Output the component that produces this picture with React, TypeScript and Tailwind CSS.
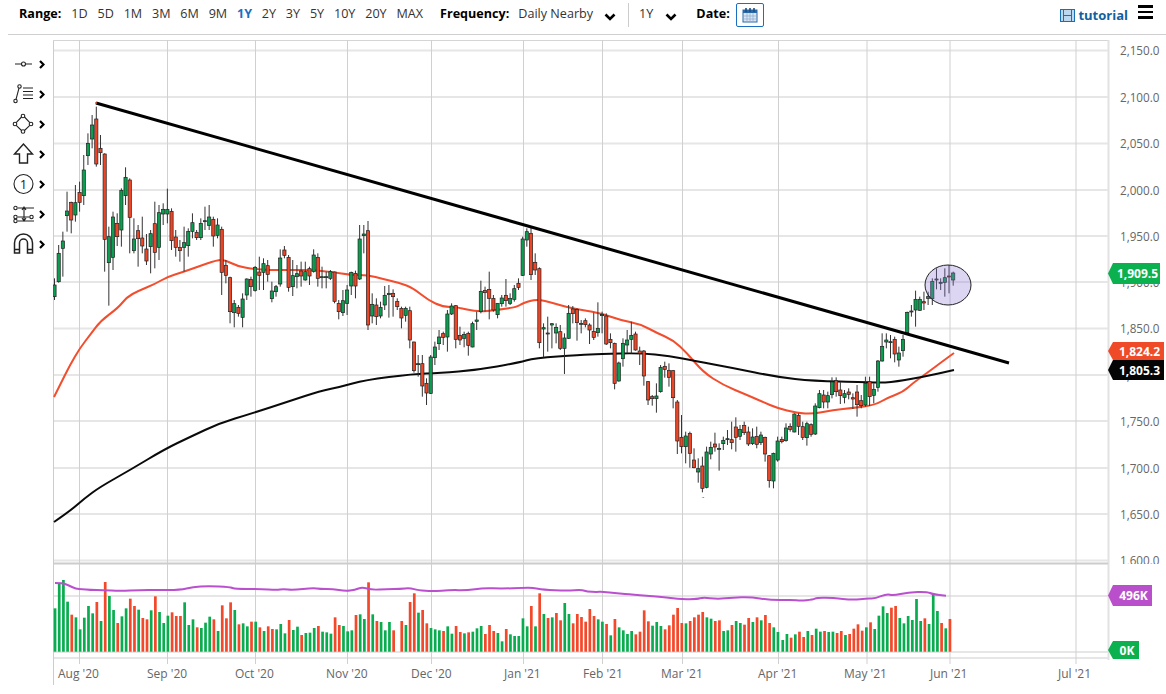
// candle rows: [high, bodyTop, bodyBottom, low, up] read in 3x crop pixels
type Row = [number, number, number, number, number];

const seriesA: Row[] = [
  [565,585,620,630,1],[465,490,575,578,1],[425,453,475,560,1],[305,363,377,425,1],[335,337,390,430,0],[285,338,375,395,1],
  [275,307,337,365,0],[195,240,317,345,1],[130,160,197,225,1],[75,105,147,175,1],[50,87,222,230,0],[135,175,188,225,0],
  [190,192,448,545,0],[410,440,518,647,1],[365,381,502,540,1],[370,400,440,468,0],[295,301,420,470,1],[232,262,317,345,1],
  [265,270,382,490,0],[385,447,482,490,1],[405,422,446,530,0],[380,444,468,490,0],[432,477,513,525,0],[420,431,470,550,1],
  [335,401,487,535,0],[345,368,472,510,1],[340,358,372,405,1],[296,358,372,400,1],[355,364,452,480,0],[420,441,472,500,0],
  [450,472,482,515,0],[410,458,472,545,1],[415,424,467,500,1],[370,398,424,445,1],[420,427,443,450,0],[385,400,443,450,1],
  [350,392,394,420,1],[345,381,406,420,1],[380,388,438,470,0],[385,405,436,445,1],[410,418,547,615,0],[510,526,556,580,0],
  [560,563,665,700,0],[630,641,668,712,1],[645,652,670,680,0],[610,627,682,712,1],[565,567,615,630,1],[560,568,590,620,0],
  [528,532,601,605,1],[500,546,556,600,0],[505,521,547,600,1],[510,527,553,575,0],[575,603,626,637,1],[585,590,605,620,1],
  [478,504,582,590,1],[468,480,496,505,0],[495,502,592,605,0],[510,557,590,618,1],[525,551,560,595,1],[515,543,558,590,0],
  [515,545,570,572,1],[530,536,558,585,0],[478,495,544,548,1],[490,502,565,590,0],[530,560,562,595,1],[545,560,562,595,1],
  [540,545,565,570,1],[545,546,634,640,0],[630,640,665,688,0],[600,632,668,678,1],
];

const seriesB: Row[] = [
  [225,240,280,315,1],[185,187,228,255,1],[182,190,228,265,0],[45,87,207,210,1],[45,72,77,130,1],[33,62,345,360,0],
  [250,283,318,340,1],[265,285,320,345,0],[275,292,318,325,1],[228,256,285,300,1],[225,250,254,323,1],[238,250,260,320,0],
  [265,274,290,300,0],[290,295,324,355,0],[290,295,316,335,1],[290,302,390,415,0],[395,396,482,488,0],[435,461,463,500,1],
  [435,461,528,560,0],[505,520,549,585,0],[435,441,550,552,1],[395,411,443,465,1],[360,381,401,420,1],[365,371,382,405,0],
  [300,312,381,425,1],[280,288,312,315,1],[285,287,388,415,0],[350,376,390,405,0],[365,373,385,412,1],[365,370,406,437,0],
  [335,341,411,412,1],[305,330,334,360,1],[212,244,305,310,1],[230,241,248,305,0],[185,238,265,328,0],[255,265,300,305,0],
  [280,280,314,325,1],[255,264,281,290,1],[207,256,272,290,0],[250,265,280,285,1],[225,236,268,275,1],[205,220,232,240,0],
  [80,87,196,198,1],[55,65,90,110,1],[50,70,194,210,0],[130,157,180,195,0],[172,176,398,415,0],[340,353,357,442,1],
  [320,369,372,425,0],[340,341,345,415,1],[340,352,369,400,1],[345,365,415,420,0],[370,384,415,492,1],[285,310,385,387,1],
  [288,297,311,340,0],[295,298,338,392,0],[330,340,343,370,1],[325,332,344,352,0],[340,345,360,402,0],[308,364,382,390,0],
  [277,355,368,380,1],[305,313,317,370,1],
];

const seriesC: Row[] = [
  [40,48,132,135,0],[100,118,128,145,0],[128,130,250,268,0],[185,189,243,245,1],[115,130,176,200,1],[90,120,135,160,1],
  [65,106,118,160,1],[95,102,150,152,0],[140,153,160,195,0],[150,153,228,257,0],[243,245,300,315,0],[285,290,296,317,0],
  [250,288,296,338,1],[195,202,275,278,1],[185,199,208,233,0],[190,211,232,260,0],[210,212,293,325,0],[300,306,423,462,0],
  [345,412,440,460,0],[395,408,440,490,1],[395,400,460,503,0],[445,480,503,505,0],[475,506,516,548,1],[470,498,565,577,0],
  [440,456,562,565,1],[425,442,462,478,1],[398,432,441,455,0],[430,445,447,512,1],[410,421,431,450,1],[390,416,419,435,1],
  [365,419,428,448,0],[352,381,412,455,0],[375,388,409,420,1],[365,376,398,405,0],[380,396,432,438,0],[385,411,431,435,1],
  [380,409,433,445,0],[395,405,428,435,1],[410,412,462,485,0],[465,467,542,563,0],[458,460,543,565,1],[410,423,480,485,1],
  [410,418,425,430,0],[370,384,422,425,1],[370,379,388,395,0],[340,342,396,397,1],[340,346,379,405,0],[365,380,412,420,0],
  [365,371,413,437,1],[370,374,403,410,0],[310,318,402,405,1],[270,281,323,325,1],[270,285,306,325,0],[275,287,306,325,1],
  [232,246,284,295,1],[232,242,275,290,0],[245,270,287,312,0],[270,281,292,310,1],[265,276,283,298,0],[280,293,297,327,0],
  [255,276,314,350,0],[285,302,317,325,0],[230,250,315,320,1],[230,245,290,318,0],[250,268,286,310,1],[180,183,262,275,1],
  [100,139,183,185,1],
];

const seriesD: Row[] = [
  [280,300,306,325,1],[285,305,307,355,1],[290,298,342,367,0],[320,339,360,380,1],[285,298,332,350,1],[215,217,278,280,1],
  [195,213,216,230,1],[152,178,210,260,1],[170,178,211,212,1],[155,185,189,210,0],[155,170,175,195,1],[115,124,176,195,1],
  [85,117,120,148,1],[115,127,129,150,1],[85,113,127,170,1],[75,108,111,160,0],[95,99,120,137,1],
];

const candleX = (i: number) => 54.5 + i * 4.18;

const toCandles = (rows: Row[], start: number, y0: number) =>
  rows.map((r, k) => ({
    x: candleX(start + k),
    hi: y0 + r[0] / 3,
    top: y0 + r[1] / 3,
    bot: y0 + r[2] / 3,
    lo: y0 + r[3] / 3,
    up: r[4] === 1,
  }));

const candles = [
  ...toCandles(seriesA, 0, 90),
  ...toCandles(seriesB, 70, 210),
  ...toCandles(seriesC, 132, 300),
  ...toCandles(seriesD, 199, 240),
];

// volume tops in crop pixels, negative means a down day
const volA = [205,130,120,185,-224,232,268,233,198,220,-186,243,-126,168,210,-249,229,205,-176,-198,209,-234,-238,211,-169,216,249,227,-217,-228,-228,187,255,238,-262,264,248,230,-238,273,-196,-235,-187,210,-253,250,259,-245,245,-262,273,-259,-267,268,252,280,-240,270,260,-285,279,278,264,-258,275,277,281,-232,-255,258,274,271,-225,223,237,-127,223,-243,246,271,246,-271];
const volB = [-243,255,-186,-160,218,-210,-250,264,268,271,-273,259,281,-258,-276,280,-277,275,265,258,-282,-255,-273,279,304,-267,283,288,288,235,259,-198,259,-160,222,-234,232,-219,-241,189,222,-250,-222,-231,-245,-207,-228,238,245,-252,286,-237,262,271,282,273,-283,-275,-211,-244,257,246,258,-268,-256,-224,-204,-249,250,-243,-232,-224,-216,232,236,-243,-241,273,271,-255,243,249,-254,-234,246,-232,241,-225,-249,262,276];
const volC = [300,282,-293,283,-275,-291,273,-285,266,275,-273,276,275,-279,-273,285,-282,-266,-253,-272,262,-247,267,227,199,219,-203,-198,234,250,228,240,177,243,-235,252,163,213,-249,265,-237];

const volBars = (list: number[], x0: number) =>
  list.map((v, k) => ({ x: x0 + k * 4.18, top: 540 + Math.abs(v) / 3, up: v > 0 }));

const bars = [...volBars(volA, 55), ...volBars(volB, 401.7), ...volBars(volC, 782.7)];

type Pt = [number, number];

const redAvg: Pt[] = [[54,397],[60,385],[70,365],[80,348],[90,335],[100.7,320.7],[118,308],[127,297],[138,291],[155,284],[167,277],[183,272],[197,267],[217,260],[225,260],[237,266],[253,269],[270,270],[290,270],[310,270],[333,272],[350,275],[368,275],[383,279],[400,283],[413,288],[428,300],[443,307],[457,307],[477,312],[497,310],[517,307],[523,303],[537,299],[553,303],[570,308],[600,313],[620,320],[640,324],[657,333],[673,340],[687,353],[703,372],[723,385],[747,395],[763,402],[777,408],[797,413],[813,414],[833,410],[853,408],[875,405],[887,398],[903,392],[913,383],[927,373],[943,361],[954,353]];
const blackAvg: Pt[] = [[54,522],[70,511],[85,498],[100,487],[130,470],[165,449],[190,437],[220,423],[250,414],[290,401],[320,391],[340,387],[365,380],[413,374],[440,373],[477,370],[517,363],[535,358],[580,355],[600,354],[640,353],[670,356],[695,361],[733,368],[777,377],[813,381],[867,382],[887,383],[923,377],[954,370]];
const volAvg: Pt[] = [[55,583],[62,583],[68,585],[76,589],[82,589],[90,590],[103,590],[120,591],[140,590],[157,590],[180,590],[193,587],[208,586],[230,587],[235,589],[260,589],[277,590],[283,589],[293,590],[313,588],[320,589],[333,589],[345,591],[355,590],[362,587],[372,590],[387,589],[400,589],[410,588],[418,590.3],[433,591.3],[450,590],[467,590.3],[483,588],[503,588.7],[523,587.7],[533,587.7],[543,589.7],[567,590.7],[582,589.7],[587,591.7],[597,592],[602,591.7],[617,593.3],[633,594.7],[660,596.7],[677,599],[697,599.3],[703,597.3],[717,599],[733,597.7],[750,597],[773,600.3],[793,599.7],[800,600.7],[813,599.7],[817,597.7],[833,598],[853,600],[867,598.3],[875,598.7],[887,593.7],[893,595.7],[908,592.3],[927,591.7],[933,594.3],[946,595.7]];

// soften the read-off points into a curve through the midpoints
const smooth = (pts: Pt[]) => {
  let d = `M${pts[0][0]} ${pts[0][1]}`;
  for (let i = 1; i < pts.length - 1; i++) {
    const mx = (pts[i][0] + pts[i + 1][0]) / 2;
    const my = (pts[i][1] + pts[i + 1][1]) / 2;
    d += `Q${pts[i][0]} ${pts[i][1]} ${mx} ${my}`;
  }
  const last = pts[pts.length - 1];
  return `${d}L${last[0]} ${last[1]}`;
};

const hGrid = [50.5, 97, 143.5, 190, 236, 282, 328.5, 375, 421, 468, 514, 560.5, 596, 652, 658];
const vGrid = [79.5, 167.5, 255.5, 347.5, 431.5, 523.5, 602.5, 682.5, 778.5, 867, 950, 1076];
const prices: [string, number][] = [
  ["2,150.0", 50.5], ["2,100.0", 97], ["2,050.0", 143.5], ["2,000.0", 190], ["1,950.0", 236], ["1,900.0", 282],
  ["1,850.0", 328.5], ["1,800.0", 375], ["1,750.0", 421], ["1,700.0", 468], ["1,650.0", 514], ["1,600.0", 560.5],
];
const months: [string, number][] = [
  ["Aug '20", 58], ["Sep '20", 147], ["Oct '20", 235], ["Nov '20", 326], ["Dec '20", 411], ["Jan '21", 504],
  ["Feb '21", 583], ["Mar '21", 661], ["Apr '21", 758], ["May '21", 844], ["Jun '21", 930], ["Jul '21", 1058],
];
const ranges = ["1D", "5D", "1M", "3M", "6M", "9M", "1Y", "2Y", "3Y", "5Y", "10Y", "20Y", "MAX"];

function Tag({ y, h, right, fill, label }: { y: number; h: number; right: number; fill: string; label: string }) {
  const mid = y + h / 2;
  return (
    <g>
      <polygon points={`1108,${mid} 1113,${y} ${right},${y} ${right},${y + h} 1113,${y + h}`} fill={fill} />
      <text x={(1113 + right) / 2 + 1} y={mid + 4.5} textAnchor="middle" fontSize="12" fontWeight="700" fill="#fff">
        {label}
      </text>
    </g>
  );
}

function Chart() {
  return (
    <svg width="1113" height="659" viewBox="53 35 1113 659" className="block">
      <line x1="53.5" y1="40" x2="53.5" y2="685" stroke="#ccc" />
      <line x1="53" y1="40.5" x2="1108" y2="40.5" stroke="#d5d5d5" />
      <line x1="1108.5" y1="40" x2="1108.5" y2="660" stroke="#e2e2e2" strokeWidth="2" />
      {hGrid.map((y) => (
        <line key={y} x1="54" y1={y} x2="1108" y2={y} stroke="#e6e6e6" strokeWidth="2" />
      ))}
      {vGrid.map((x) => (
        <line key={x} x1={x} y1="40" x2={x} y2="664" stroke="#d0d0d0" />
      ))}

      {prices.map(([label, y]) => (
        <text key={label} x="1159.500" y={y + 4.5} textAnchor="end" fontSize="11.700" fill="#666">
          {label}
        </text>
      ))}
      <rect x="1110" y="564" width="56" height="14" fill="#fff" />
      <line x1="54" y1="563.5" x2="1108" y2="563.5" stroke="#ccc" strokeWidth="2" />

      <path d={smooth(redAvg)} fill="none" stroke="#f24e2e" strokeWidth="2" />
      <path d={smooth(blackAvg)} fill="none" stroke="#0a0a0a" strokeWidth="2" />

      {candles.map((c, i) => (
        <g key={i}>
          <line x1={c.x} y1={c.hi} x2={c.x} y2={c.lo} stroke="#333" />
          <rect
            x={c.x - 1.6}
            y={c.top}
            width="3.2"
            height={Math.max(c.bot - c.top, 1)}
            fill={c.up ? "#0a9f50" : "#ee4526"}
            stroke="#222"
            strokeWidth="0.7"
          />
        </g>
      ))}

      <line x1="96" y1="103" x2="1009" y2="363" stroke="#000" strokeWidth="3" />
      <circle cx="96" cy="103" r="1" fill="#f24e2e" />
      <path d="M701.5 497h3l-1 1z" fill="#f24e2e" />
      <ellipse cx="948" cy="285" rx="23" ry="20" fill="#8f78d8" fillOpacity="0.3" stroke="#222" />

      {bars.map((b, i) => (
        <rect key={i} x={b.x - 1.3} y={b.top} width="2.7" height={651.7 - b.top} fill={b.up ? "#09ad50" : "#f3482a"} />
      ))}
      <path d={smooth(volAvg)} fill="none" stroke="#bb50cf" strokeWidth="2" />

      {months.map(([label, x]) => (
        <text key={label} x={x} y="678" fontSize="12" fill="#666">
          {label}
        </text>
      ))}

      <Tag y={263} h={21} right={1160} fill="#0bb14f" label="1,909.5" />
      <Tag y={342} h={18} right={1164} fill="#f04b28" label="1,824.2" />
      <Tag y={360} h={20} right={1164} fill="#050505" label="1,805.3" />
      <Tag y={585} h={21} right={1152} fill="#ba4fcc" label="496K" />
      <Tag y={641} h={18} right={1139} fill="#0bb14f" label="0K" />
    </svg>
  );
}

function ToolIcon({ children }: { children: React.ReactNode }) {
  return (
    <div className="h-[30px] flex items-center pl-[12px]">
      <svg width="24" height="24" viewBox="0 0 24 24" fill="none" stroke="#222" strokeWidth="1.1">
        {children}
      </svg>
      <svg width="6" height="9" viewBox="0 0 6 9" className="ml-[3px]">
        <path d="M1 1l3.500 3.500L1 8" fill="none" stroke="#000" strokeWidth="2.200" />
      </svg>
    </div>
  );
}

function ChevronIcon() {
  return (
    <svg width="12" height="8" viewBox="0 0 12 8" className="mt-[4px] shrink-0">
      <path d="M1.500 1.500 6 6l4.500-4.500" fill="none" stroke="#000" strokeWidth="2.600" />
    </svg>
  );
}

function ToolRail() {
  return (
    <div className="w-[53px] shrink-0 pt-[14px]">
      <ToolIcon>
        <path d="M3 12h6M14 12h6" />
        <circle cx="11.500" cy="12" r="2" />
      </ToolIcon>
      <ToolIcon>
        <circle cx="3.500" cy="19" r="1.700" />
        <circle cx="7.500" cy="4.500" r="1.700" />
        <path d="M4 17.300 7 6.200M11 6h10M11 9.500h10M11 13h10M11 16.500h10" />
      </ToolIcon>
      <ToolIcon>
        <circle cx="11" cy="4" r="1.800" />
        <circle cx="3" cy="12" r="1.800" />
        <circle cx="19" cy="12" r="1.800" />
        <circle cx="11" cy="19.500" r="1.800" />
        <path d="M9.500 5 4.200 10.600M12.500 5l5.300 5.600M4.200 13.400 9.500 18.500M17.800 13.400 12.500 18.500" />
      </ToolIcon>
      <ToolIcon>
        <path d="M11.500 2 2.500 12h5v9h8v-9h5z" strokeWidth="1.400" />
      </ToolIcon>
      <ToolIcon>
        <circle cx="11.500" cy="12" r="9.500" />
        <text x="11.500" y="16.500" textAnchor="middle" fontSize="13" fill="#222" stroke="none">
          1
        </text>
      </ToolIcon>
      <ToolIcon>
        <circle cx="3.500" cy="6" r="1.700" />
        <circle cx="3.500" cy="15" r="1.700" />
        <circle cx="3.500" cy="19" r="1.700" />
        <circle cx="19.500" cy="15" r="1.700" />
        <path d="M6 6h16M6 15h11.500M6 19h16M12 5v14M10 8l2-3 2 3M10 16l2 3 2-3" />
      </ToolIcon>
      <ToolIcon>
        <path d="M2.500 21V11a9 9 0 0 1 18 0v10h-5V11a4 4 0 0 0-8 0v10zM2.500 17.500h5M15.500 17.500h5" strokeWidth="1.500" />
      </ToolIcon>
    </div>
  );
}

function Toolbar() {
  return (
    <div className="ml-[8px] h-[35px] border-b border-[#cfcfcf] flex items-center text-[12.6px] leading-none text-[#333] pb-[5px]">
      <span className="ml-[11px] font-bold text-black">Range:</span>
      <div className="ml-[10px] flex gap-[9.8px]">
        {ranges.map((r) => (
          <span key={r} className={r === "1Y" ? "font-bold text-[#1a6fc0]" : ""}>
            {r}
          </span>
        ))}
      </div>
      <span className="ml-[17px] font-bold text-black">Frequency:</span>
      <span className="ml-[9px]">Daily Nearby</span>
      <div className="ml-[11px]">
        <ChevronIcon />
      </div>
      <div className="ml-[12px] w-px h-[24px] bg-[#ccc]" />
      <span className="ml-[10px]">1Y</span>
      <div className="ml-[12px]">
        <ChevronIcon />
      </div>
      <span className="ml-[19px] font-bold text-black">Date:</span>
      <div className="ml-[6px] w-[28px] h-[24px] border border-[#1a6fc0] rounded-[2px] flex items-center justify-center">
        <svg width="16" height="16" viewBox="0 0 16 16">
          <rect x="1" y="3" width="14" height="12" fill="#dbe6f3" stroke="#2b6aa8" />
          <rect x="1" y="3" width="14" height="3" fill="#2b6aa8" />
          <path d="M4 1v4M8 1v4M12 1v4" stroke="#1d4f80" strokeWidth="1.600" />
          <path d="M5 6v9M8 6v9M11 6v9M1 9h14M1 12h14" stroke="#8aa9cc" strokeWidth="0.700" />
        </svg>
      </div>
      <div className="ml-auto flex items-center mr-[13px]">
        <svg width="15" height="13" viewBox="0 0 15 13" className="mt-[2px]">
          <rect x="0.500" y="0.500" width="14" height="12" fill="#bcd8f0" stroke="#1b6fb5" />
          <path d="M3.500 0.500v12M11.500 0.500v12M3.500 6.500h8" stroke="#1b6fb5" />
        </svg>
        <span className="ml-[3px] font-bold text-[#11609f] text-[13px] mt-[2px]">tutorial</span>
        <div className="ml-[10px] flex flex-col gap-[3px] mb-[5px]">
          <div className="w-[15px] h-[2.500px] bg-black" />
          <div className="w-[15px] h-[2.500px] bg-black" />
          <div className="w-[15px] h-[2.500px] bg-black" />
        </div>
      </div>
    </div>
  );
}

export default function App() {
  return (
    <div className="w-[1166px] h-[694px] overflow-hidden bg-white font-['Open_Sans',sans-serif]">
      <Toolbar />
      <div className="flex">
        <ToolRail />
        <Chart />
      </div>
    </div>
  );
}
